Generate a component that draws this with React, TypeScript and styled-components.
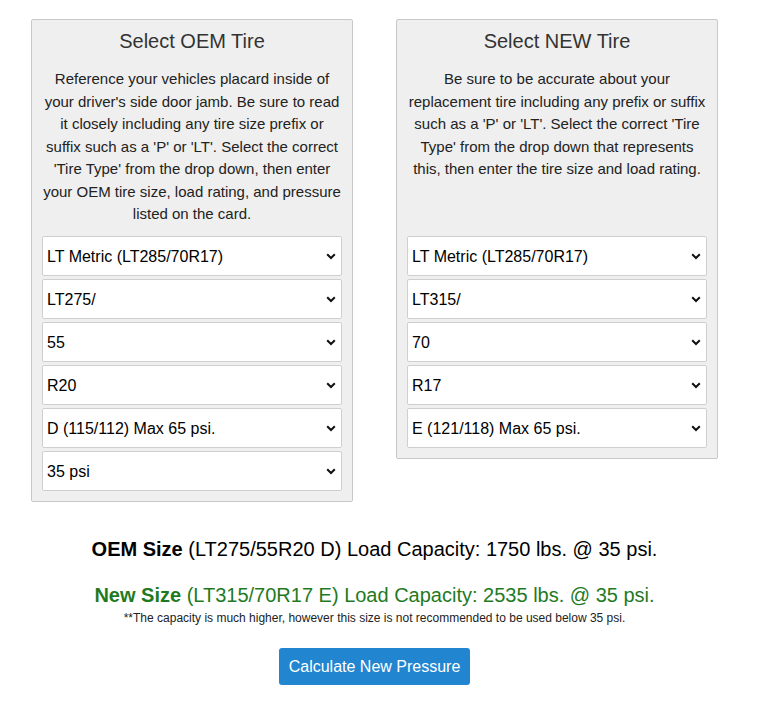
import { FunctionComponent } from "react"
import styled, { createGlobalStyle } from 'styled-components'

const GlobalStyle = createGlobalStyle`
    body{
        margin: 0;
        background: #fff;
        font-family: "Liberation Sans", Arial, sans-serif;
    }
`

const Page = styled.div`
    width: 749px;
    padding-top: 19px;
    display: flex;
    flex-direction: column;
    align-items: center;
`

const Panels = styled.div`
    display: flex;
    align-items: flex-start;
    gap: 43px;
`

const Panel = styled.div`
    width: 300px;
    padding: 10px 10px 10px;
    background-color: #efefef;
    border: 1px solid #c8c8c8;
    border-radius: 2px;
    display: flex;
    flex-direction: column;
`

const Title = styled.h3`
    margin: 0;
    font-size: 20px;
    line-height: 23px;
    font-weight: normal;
    color: #333;
    text-align: center;
`

const Description = styled.p`
    margin: 15px 0 10px;
    height: 158px;
    font-size: 15px;
    line-height: 22.5px;
    color: #222;
    text-align: center;
`

const Fields = styled.div`
    display: flex;
    flex-direction: column;
    gap: 3px;
`

const SelectWrap = styled.div`
    position: relative;
    height: 40px;

    svg{
        position: absolute;
        right: 6px;
        top: 17px;
        pointer-events: none;
    }
`

const Select = styled.select`
    appearance: none;
    width: 100%;
    height: 40px;
    padding: 0 20px 0 4px;
    font-family: "Liberation Sans", Arial, sans-serif;
    font-size: 16px;
    color: #000;
    background: #fff;
    border: 1px solid #cfcfcf;
    border-radius: 2px;
    outline: none;
`

const Results = styled.div`
    margin-top: 36px;
    text-align: center;
`

const SizeLine = styled.div<{ $color: string }>`
    font-size: 20px;
    line-height: 23px;
    color: ${p => p.$color};

    & + &{
        margin-top: 23px;
    }

    b{
        font-weight: bold;
    }
`

const Note = styled.div`
    font-size: 12px;
    line-height: 14px;
    margin-top: 4px;
    color: #222;
`

const Button = styled.button`
    margin-top: 23px;
    height: 37px;
    padding: 0 10px;
    border: none;
    border-radius: 3px;
    background-color: #2185d0;
    color: #fff;
    font-family: "Liberation Sans", Arial, sans-serif;
    font-size: 16px;
    cursor: pointer;
`

const Chevron = () => (
    <svg width="10" height="7" viewBox="0 0 10 7">
        <path d="M1.2 1.2 L5 5 L8.8 1.2" fill="none" stroke="#111" strokeWidth="2" />
    </svg>
)

const Dropdown:FunctionComponent<{ value: string }> = ({ value })=>{
    return(
        <SelectWrap>
            <Select defaultValue={value}>
                <option>{value}</option>
            </Select>
            <Chevron/>
        </SelectWrap>
    )
}

const oemFields = ['LT Metric (LT285/70R17)', 'LT275/', '55', 'R20', 'D (115/112) Max 65 psi.', '35 psi']
const newFields = ['LT Metric (LT285/70R17)', 'LT315/', '70', 'R17', 'E (121/118) Max 65 psi.']

const App:FunctionComponent = ()=>{
    return(
        <Page>
            <GlobalStyle/>
            <Panels>
                <Panel>
                    <Title>Select OEM Tire</Title>
                    <Description>
                        Reference your vehicles placard inside of your driver's side door jamb. Be sure to read it closely including any tire size prefix or suffix such as a 'P' or 'LT'. Select the correct 'Tire Type' from the drop down, then enter your OEM tire size, load rating, and pressure listed on the card.
                    </Description>
                    <Fields>
                        {oemFields.map((f, i) => <Dropdown key={i} value={f}/>)}
                    </Fields>
                </Panel>
                <Panel>
                    <Title>Select NEW Tire</Title>
                    <Description>
                        Be sure to be accurate about your replacement tire including any prefix or suffix such as a 'P' or 'LT'. Select the correct 'Tire Type' from the drop down that represents this, then enter the tire size and load rating.
                    </Description>
                    <Fields>
                        {newFields.map((f, i) => <Dropdown key={i} value={f}/>)}
                    </Fields>
                </Panel>
            </Panels>
            <Results>
                <SizeLine $color="#000">
                    <b>OEM Size</b> (LT275/55R20 D) Load Capacity: 1750 lbs. @ 35 psi.
                </SizeLine>
                <SizeLine $color="#1f7a1f">
                    <b>New Size</b> (LT315/70R17 E) Load Capacity: 2535 lbs. @ 35 psi.
                </SizeLine>
                <Note>**The capacity is much higher, however this size is not recommended to be used below 35 psi.</Note>
            </Results>
            <Button>Calculate New Pressure</Button>
        </Page>
    )
}

export default App
